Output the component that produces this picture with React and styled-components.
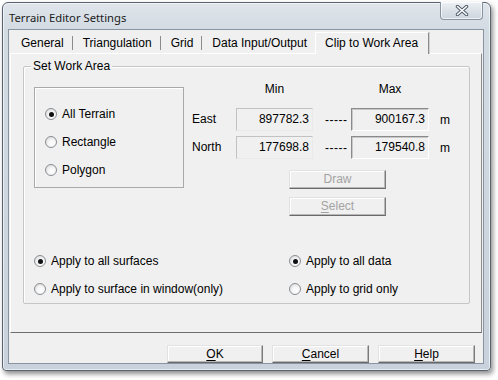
import React from 'react';
import styled, { createGlobalStyle } from 'styled-components';

const GlobalStyle = createGlobalStyle`
  html, body {
    margin: 0;
    padding: 0;
    background: #ffffff;
  }
  body {
    font-family: "Liberation Sans", Arial, sans-serif;
    font-size: 12px;
    color: #000000;
  }
`;

const Page = styled.div`
  width: 498px;
  height: 380px;
  padding: 2px 0 0 2px;
  box-sizing: border-box;
  background: #ffffff;
`;

const Window = styled.div`
  width: 489px;
  height: 369px;
  box-sizing: border-box;
  display: flex;
  flex-direction: column;
  padding: 0 6px 6px 5px;
  border: 1px solid #58636f;
  border-radius: 6px 6px 4px 4px;
  background: linear-gradient(180deg, #dfe5eb 0px, #d2dae2 28px, #c9d2dc 100%);
  box-shadow: 2px 3px 5px rgba(0, 0, 0, 0.45), inset 0 0 0 1px rgba(255, 255, 255, 0.6);
`;

const TitleBar = styled.div`
  height: 26px;
  flex-shrink: 0;
  display: flex;
  align-items: flex-start;
  justify-content: space-between;
`;

const Title = styled.span`
  font-family: "Noto Sans", "Open Sans", sans-serif;
  font-size: 11.25px;
  line-height: 16px;
  margin: 7px 0 0 1px;
  color: #1a1a1a;
`;

const CloseButton = styled.button`
  width: 43px;
  height: 18px;
  margin: -1px 1px 0 0;
  padding: 0;
  display: flex;
  align-items: center;
  justify-content: center;
  border: 1px solid #8893a0;
  border-top: none;
  border-radius: 0 0 4px 4px;
  background: linear-gradient(180deg, #eef1f4 0%, #dbe1e7 50%, #cdd5de 100%);
  box-shadow: inset 0 0 0 1px rgba(255, 255, 255, 0.7);
`;

const Client = styled.div`
  flex: 1;
  display: flex;
  flex-direction: column;
  background: #f0f0f0;
  border: 1px solid #8994a1;
`;

const TabStrip = styled.div`
  display: flex;
  align-items: flex-end;
  height: 20px;
  margin-top: 3px;
  padding-left: 2px;
`;

const Tab = styled.div`
  position: relative;
  height: 20px;
  line-height: 20px;
  padding: 0 ${(p) => (p.$last ? '8px' : '9px')} 0 10px;
  white-space: nowrap;
  &::after {
    content: ${(p) => (p.$last ? 'none' : "''")};
    position: absolute;
    right: 0;
    top: 3px;
    height: 14px;
    width: 1px;
    background: #8c8c8c;
  }
`;

const ActiveTab = styled.div`
  height: 21px;
  line-height: 21px;
  margin: 0 0 -1px 0;
  padding: 0 10px 0 9px;
  background: #f0f0f0;
  border-top: 1px solid #ffffff;
  border-left: 1px solid #ffffff;
  border-right: 1px solid #8c8c8c;
  box-shadow: 1px 0 0 #d0d0d0;
  position: relative;
  z-index: 1;
  white-space: nowrap;
`;

const Panel = styled.div`
  height: 280px;
  box-sizing: border-box;
  margin: 0 1px;
  padding: 12px 0 0 12px;
  border-top: 1px solid #ffffff;
  border-left: 1px solid #ffffff;
  border-right: 1px solid #8c8c8c;
  border-bottom: 1px solid #6e6e6e;
`;

const GroupBox = styled.div`
  position: relative;
  width: 447px;
  height: 238px;
  box-sizing: border-box;
  padding: 14px 0 0 10px;
  border: 1px solid #c6c6c6;
  border-radius: 2px;
  box-shadow: inset 1px 1px 0 #ffffff;
`;

const GroupTitle = styled.span`
  position: absolute;
  top: -8px;
  left: 7px;
  padding: 0 2px;
  line-height: 14px;
  background: #f0f0f0;
`;

const TopRow = styled.div`
  display: flex;
  align-items: flex-start;
`;

const ModeBox = styled.div`
  width: 150px;
  height: 101px;
  box-sizing: border-box;
  margin-top: 6px;
  padding: 12px 0 0 10px;
  border: 1px solid #a9a9a9;
  box-shadow: inset 1px 1px 0 #ffffff;
  display: flex;
  flex-direction: column;
`;

const RadioRow = styled.label`
  display: flex;
  align-items: center;
  height: ${(p) => p.$h || 28}px;
  gap: 5px;
  white-space: nowrap;
`;

const Circle = styled.span`
  width: 12px;
  height: 12px;
  box-sizing: border-box;
  border-radius: 50%;
  border: 1px solid #8a8e92;
  background: radial-gradient(circle at 60% 65%, #ffffff 0%, #f6f6f6 40%, #d2d2d2 100%);
  display: flex;
  align-items: center;
  justify-content: center;
  flex-shrink: 0;
  &::after {
    content: '';
    width: 5px;
    height: 5px;
    border-radius: 50%;
    background: ${(p) => (p.$on ? '#111111' : 'transparent')};
  }
`;

const CoordArea = styled.div`
  margin-left: 8px;
  display: flex;
  flex-direction: column;
`;

const CoordGrid = styled.div`
  display: grid;
  grid-template-columns: 44px 77px 38px 78px 20px;
  grid-template-rows: 22px 23px 23px;
  row-gap: 5px;
  align-items: center;
`;

const Header = styled.span`
  align-self: start;
  text-align: center;
  line-height: 16px;
`;

const RowLabel = styled.span`
  line-height: 23px;
`;

const ValueBox = styled.div`
  height: 23px;
  box-sizing: border-box;
  padding-right: 3px;
  line-height: 21px;
  text-align: right;
  background: #f0f0f0;
  border: 1px solid;
  border-color: ${(p) =>
    p.$sunken ? '#8a8a8a #ffffff #ffffff #8a8a8a' : '#c2c2c2 #e9e9e9 #e9e9e9 #c2c2c2'};
  box-shadow: ${(p) => (p.$sunken ? 'inset 1px 1px 0 #c8c8c8' : 'none')};
`;

const Dash = styled.span`
  padding-left: 12px;
  letter-spacing: 0.5px;
`;

const Unit = styled.span`
  padding-left: 11px;
`;

const ActionColumn = styled.div`
  display: flex;
  flex-direction: column;
  gap: 8px;
  margin: 11px 0 0 97px;
`;

const PushButton = styled.button`
  width: ${(p) => p.$w || 97}px;
  height: ${(p) => p.$h || 19}px;
  padding: 0;
  font-family: "Liberation Sans", Arial, sans-serif;
  font-size: 12px;
  line-height: 15px;
  color: ${(p) => (p.disabled ? '#a3a3a3' : '#000000')};
  background: #f0f0f0;
  border: 1px solid;
  border-color: #e2e2e2 #7a7a7a #6a6a6a #e2e2e2;
  box-shadow: inset -1px -1px 0 #b8b8b8, inset 1px 1px 0 #ffffff;
  u {
    text-decoration: underline;
    text-underline-offset: 2px;
  }
`;

const ApplyGrid = styled.div`
  margin-top: 35px;
  display: grid;
  grid-template-columns: 255px 1fr;
  row-gap: 8px;
`;

const ButtonBar = styled.div`
  flex: 1;
  display: flex;
  justify-content: flex-end;
  align-items: flex-start;
  gap: 9px;
  padding: 12px 8px 0 0;
`;

const CloseGlyph = () => (
  <svg width="14" height="11" viewBox="0 0 14 11">
    <path d="M2.5 1.5 L11.5 9.5 M11.5 1.5 L2.5 9.5" stroke="#4b5866" strokeWidth="3.4" strokeLinecap="round" />
    <path d="M2.5 1.5 L11.5 9.5 M11.5 1.5 L2.5 9.5" stroke="#ffffff" strokeWidth="1.6" strokeLinecap="round" />
  </svg>
);

const Radio = ({ on, children, h }) => (
  <RadioRow $h={h}>
    <Circle $on={on} />
    <span>{children}</span>
  </RadioRow>
);

const tabs = ['General', 'Triangulation', 'Grid', 'Data Input/Output'];

const coords = [
  { label: 'East', min: '897782.3', max: '900167.3' },
  { label: 'North', min: '177698.8', max: '179540.8' },
];

export default function App() {
  return (
    <Page>
      <GlobalStyle />
      <Window>
        <TitleBar>
          <Title>Terrain Editor Settings</Title>
          <CloseButton aria-label="Close">
            <CloseGlyph />
          </CloseButton>
        </TitleBar>
        <Client>
          <TabStrip>
            {tabs.map((t, i) => (
              <Tab key={t} $last={i === tabs.length - 1}>
                {t}
              </Tab>
            ))}
            <ActiveTab>Clip to Work Area</ActiveTab>
          </TabStrip>
          <Panel>
            <GroupBox>
              <GroupTitle>Set Work Area</GroupTitle>
              <TopRow>
                <ModeBox>
                  <Radio on>All Terrain</Radio>
                  <Radio>Rectangle</Radio>
                  <Radio>Polygon</Radio>
                </ModeBox>
                <CoordArea>
                  <CoordGrid>
                    <span />
                    <Header>Min</Header>
                    <span />
                    <Header>Max</Header>
                    <span />
                    {coords.map((c) => (
                      <React.Fragment key={c.label}>
                        <RowLabel>{c.label}</RowLabel>
                        <ValueBox>{c.min}</ValueBox>
                        <Dash>-----</Dash>
                        <ValueBox $sunken>{c.max}</ValueBox>
                        <Unit>m</Unit>
                      </React.Fragment>
                    ))}
                  </CoordGrid>
                  <ActionColumn>
                    <PushButton disabled>Draw</PushButton>
                    <PushButton disabled>
                      <u>S</u>elect
                    </PushButton>
                  </ActionColumn>
                </CoordArea>
              </TopRow>
              <ApplyGrid>
                <Radio on h={20}>Apply to all surfaces</Radio>
                <Radio on h={20}>Apply to all data</Radio>
                <Radio h={20}>Apply to surface in window(only)</Radio>
                <Radio h={20}>Apply to grid only</Radio>
              </ApplyGrid>
            </GroupBox>
          </Panel>
          <ButtonBar>
            <PushButton $w={96} $h={18}>
              <u>O</u>K
            </PushButton>
            <PushButton $h={18}>
              <u>C</u>ancel
            </PushButton>
            <PushButton $h={18}>
              <u>H</u>elp
            </PushButton>
          </ButtonBar>
        </Client>
      </Window>
    </Page>
  );
}
